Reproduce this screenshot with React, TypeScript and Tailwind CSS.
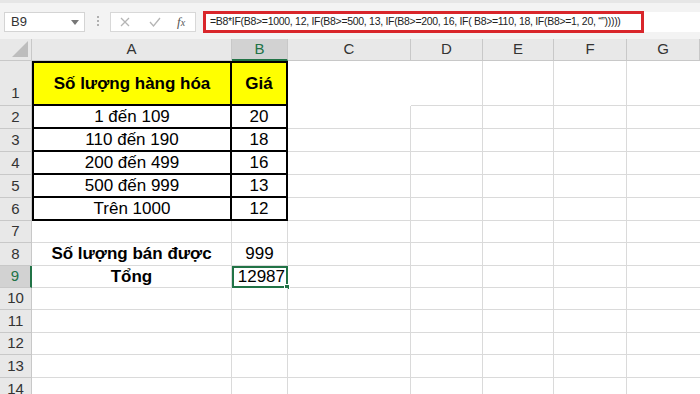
import React from 'react';

const widths = ['w-[32px]', 'w-[200px]', 'w-[56px]', 'w-[123px]', 'w-[72px]', 'w-[71px]', 'w-[73px]', 'w-[73px]'];
const letters = ['A', 'B', 'C', 'D', 'E', 'F', 'G', ''];

type Row = {
  n: number;
  h: string;
  a?: string;
  b?: string;
  bold?: boolean;
  bBold?: boolean;
  table?: boolean;
  yellow?: boolean;
};

const rows: Row[] = [
  { n: 1, h: 'h-[45px]', a: 'Số lượng hàng hóa', b: 'Giá', bold: true, bBold: true, table: true, yellow: true },
  { n: 2, h: 'h-[23px]', a: '1 đến 109', b: '20', table: true },
  { n: 3, h: 'h-[23px]', a: '110 đến 190', b: '18', table: true },
  { n: 4, h: 'h-[23px]', a: '200 đến 499', b: '16', table: true },
  { n: 5, h: 'h-[23px]', a: '500 đến 999', b: '13', table: true },
  { n: 6, h: 'h-[23px]', a: 'Trên 1000', b: '12', table: true },
  { n: 7, h: 'h-[22px]' },
  { n: 8, h: 'h-[23px]', a: 'Số lượng bán được', b: '999', bold: true },
  { n: 9, h: 'h-[22px]', a: 'Tổng', b: '12987', bold: true },
  { n: 10, h: 'h-[22px]' },
  { n: 11, h: 'h-[23px]' },
  { n: 12, h: 'h-[22px]' },
  { n: 13, h: 'h-[23px]' },
  { n: 14, h: 'h-[23px]' },
];

function Toolbar() {
  return (
    <div className="flex h-[35px] items-start bg-[#f3f3f3] pt-[9px] border-t-[3px] border-[#e6e6e6]">
      <div className="ml-[4px] flex h-[20px] w-[81px] items-center justify-between border border-[#d4d4d4] bg-white pl-[6px] pr-[5px] text-[13px] text-[#333]">
        <span>B9</span>
        <svg width="8" height="5" viewBox="0 0 8 5"><path d="M0 0h8L4 5z" fill="#777" /></svg>
      </div>
      <div className="flex w-[25px] flex-col items-center gap-[2px] pt-[4px]">
        <span className="h-[2px] w-[2px] bg-[#b0b0b0]" />
        <span className="h-[2px] w-[2px] bg-[#b0b0b0]" />
        <span className="h-[2px] w-[2px] bg-[#b0b0b0]" />
      </div>
      <div className="flex h-[20px] w-[86px] items-center border border-[#d8d8d8] bg-white">
        <svg className="ml-[9px]" width="10" height="10" viewBox="0 0 10 10"><path d="M1 1l8 8M9 1l-8 8" stroke="#b5b5b5" strokeWidth="1.3" /></svg>
        <svg className="ml-[19px]" width="12" height="10" viewBox="0 0 12 10"><path d="M1 5l3.5 4L11 1" stroke="#b5b5b5" strokeWidth="1.3" fill="none" /></svg>
        <span className="ml-[16px] text-[13px] italic text-[#555] [font-family:'Liberation_Serif',serif]">f<span className="text-[10px]">x</span></span>
      </div>
      <div className="ml-[7px] flex h-[20px] flex-1 items-center bg-white">
        <div className="flex h-[22px] w-[441px] items-center border-[3px] border-[#d9262b] pl-[4px] text-[10.5px] tracking-[-0.3px] text-[#222] whitespace-nowrap">
          =B8*IF(B8&gt;=1000, 12, IF(B8&gt;=500, 13, IF(B8&gt;=200, 16, IF( B8&gt;=110, 18, IF(B8&gt;=1, 20, “”)))))
        </div>
      </div>
    </div>
  );
}

function HeaderRow() {
  return (
    <div className="flex h-[26px] bg-[#f3f3f3] pt-[4px]">
      <div className={`${widths[0]} flex items-end justify-end border-r border-b border-[#c8c8c8] bg-[#e8e8e8] pb-[3px] pr-[3px]`}>
        <svg width="16" height="16" viewBox="0 0 16 16"><path d="M16 0v16H0z" fill="#bdbdbd" /></svg>
      </div>
      {letters.slice(0, 7).map((l, i) => (
        <div
          key={l}
          className={`${widths[i + 1]} flex items-center justify-center border-r border-[#c8c8c8] text-[15px] ${
            l === 'B'
              ? 'bg-[#d2d2d2] border-b-2 border-b-[#217346] text-[#217346]'
              : 'bg-[#e8e8e8] border-b border-b-[#c8c8c8] text-[#333]'
          }`}
        >
          {l}
        </div>
      ))}
      <div className="flex-1 border-b border-[#c8c8c8] bg-[#e8e8e8]" />
    </div>
  );
}

function SheetRow({ r }: { r: Row }) {
  const sel = r.n === 9;
  const fill = r.yellow ? 'bg-[#ffff00]' : 'bg-white';
  const aBorder = r.table
    ? `border-l-2 border-r-2 border-b-2 border-black ${r.n === 1 ? 'border-t-2' : ''}`
    : 'border-r border-b border-[#dadada]';
  const bBorder = sel
    ? 'border-2 border-[#217346]'
    : r.table
      ? `border-r-2 border-b-2 border-black ${r.n === 1 ? 'border-t-2' : ''}`
      : 'border-r border-b border-[#dadada]';
  return (
    <div className={`flex ${r.h}`}>
      <div
        className={`${widths[0]} flex justify-center text-[15px] ${r.n === 1 ? 'items-end pb-[1px]' : 'items-center'} ${
          sel
            ? 'bg-[#d2d2d2] border-r-2 border-r-[#217346] text-[#217346]'
            : 'bg-[#e8e8e8] border-r border-r-[#c8c8c8] text-[#333]'
        } border-b border-b-[#c8c8c8]`}
      >
        {r.n}
      </div>
      <div className={`${widths[1]} flex items-center justify-center ${fill} ${aBorder} ${r.bold ? 'font-bold' : ''} text-[17px] text-black`}>
        {r.a}
      </div>
      <div
        className={`${widths[2]} relative flex items-center ${sel ? 'justify-end pr-[1px]' : 'justify-center'} ${fill} ${bBorder} ${
          r.bBold ? 'font-bold' : ''
        } text-[17px] text-black`}
      >
        {r.b}
        {sel && <span className="absolute -bottom-[4px] -right-[4px] h-[6px] w-[6px] border border-white bg-[#217346]" />}
      </div>
      <div className={`${widths[3]} bg-white ${r.n === 1 ? '' : 'border-r border-b border-[#dadada]'}`} />
      <div className={`${widths[4]} bg-white border-r border-b border-[#dadada]`} />
      <div className={`${widths[5]} bg-white border-r border-b border-[#dadada]`} />
      <div className={`${widths[6]} bg-white border-r border-b border-[#dadada]`} />
      <div className="flex-1 bg-white border-b border-[#dadada]" />
    </div>
  );
}

export default function App() {
  return (
    <div className="h-[394px] w-[700px] overflow-hidden bg-white [font-family:'Liberation_Sans',Arial,sans-serif]">
      <Toolbar />
      <HeaderRow />
      {rows.map((r) => (
        <SheetRow key={r.n} r={r} />
      ))}
    </div>
  );
}
